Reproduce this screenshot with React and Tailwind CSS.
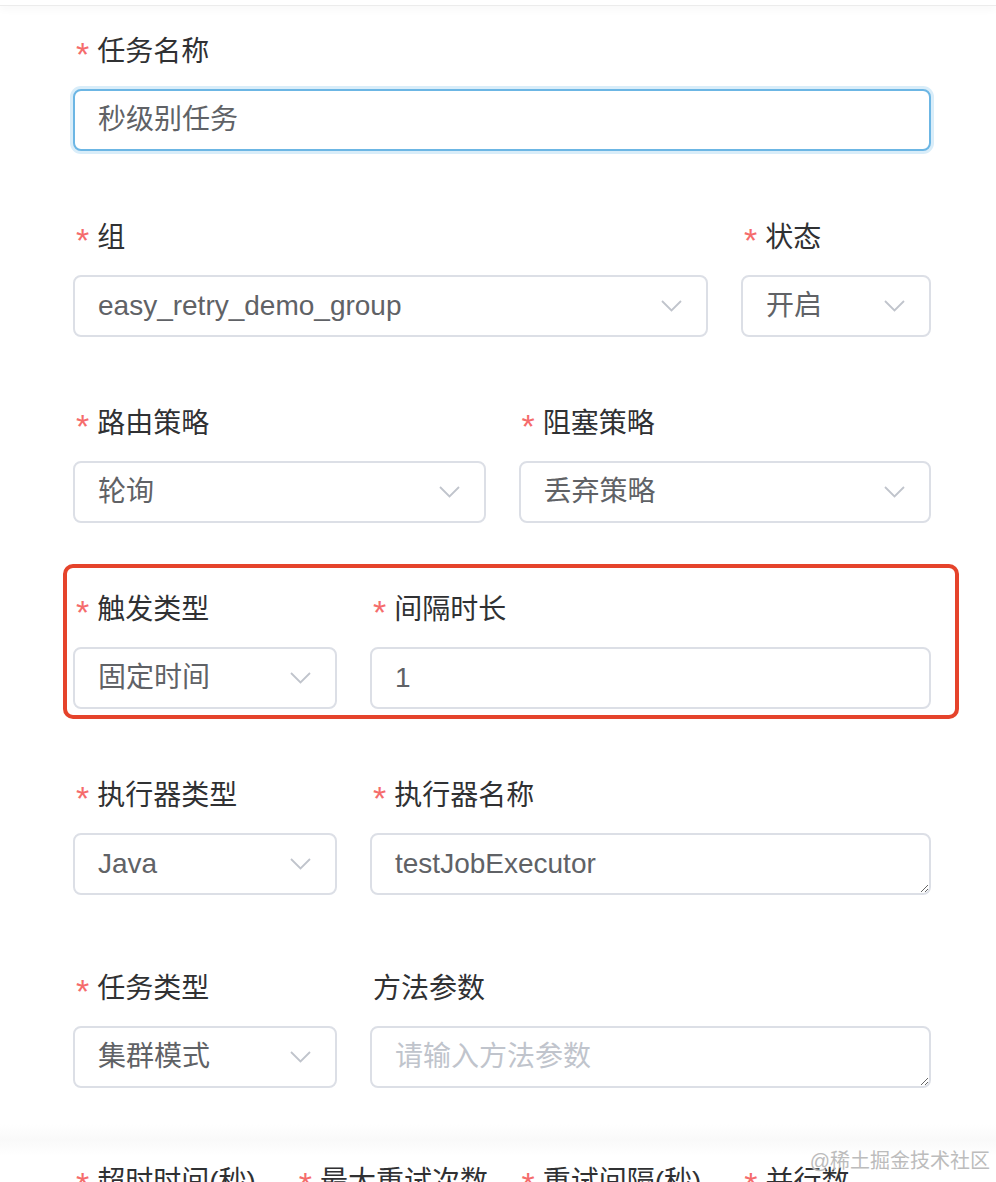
import React from "react";

const FONT = { fontFamily: '"Liberation Sans", "Noto Sans CJK SC", sans-serif' };

function Label({ text, required = true }) {
  return (
    <div className="h-[40px] flex items-center pl-[3px] text-[28px] text-[#303133] leading-none whitespace-nowrap">
      {required && (
        <span className="text-[#f56c6c] text-[34px] mr-[8px] relative top-[2px]">*</span>
      )}
      <span>{text}</span>
    </div>
  );
}

function Chevron() {
  return (
    <svg width="21" height="12" viewBox="0 0 21 12" fill="none">
      <polyline points="1,1 10.5,10.5 20,1" stroke="#c0c4cc" strokeWidth="1.8" />
    </svg>
  );
}

function Select({ value }) {
  return (
    <div className="h-[62px] border-2 border-[#dcdfe6] rounded-[8px] flex items-center justify-between pl-[23px] pr-[24px] text-[28px] text-[#606266] bg-white">
      <span className="whitespace-nowrap">{value}</span>
      <Chevron />
    </div>
  );
}

function Input({ value, focused = false }) {
  return (
    <div
      className={`h-[62px] rounded-[8px] flex items-center pl-[23px] text-[28px] text-[#606266] bg-white ${
        focused
          ? "border-2 border-[#6cb6e4] shadow-[0_0_0_3px_#d9edf9]"
          : "border-2 border-[#dcdfe6]"
      }`}
    >
      {value}
    </div>
  );
}

function TextArea({ value, placeholder }) {
  return (
    <textarea
      readOnly
      rows={1}
      value={value}
      placeholder={placeholder}
      style={FONT}
      className="block w-full h-[62px] border-2 border-[#dcdfe6] rounded-[8px] px-[23px] pt-[9px] text-[28px] leading-[40px] text-[#606266] placeholder-[#c0c4cc] outline-none resize-y bg-white"
    />
  );
}

function Item({ label, required, children, className = "" }) {
  return (
    <div className={`flex flex-col ${className}`}>
      <Label text={label} required={required} />
      <div className="mt-[17px]">{children}</div>
    </div>
  );
}

export default function App() {
  return (
    <div className="relative h-[1182px] bg-white overflow-hidden" style={FONT}>
      {/* top header shadow */}
      <div className="h-[6px] border-b border-[#ececec] shadow-[0_3px_8px_rgba(0,0,0,0.04)]" />

      <div className="pt-[26px] pl-[73px] w-[931px] flex flex-col gap-[67px]">
        <Item label="任务名称">
          <Input value="秒级别任务" focused />
        </Item>

        <div className="flex gap-[33px]">
          <Item label="组" className="flex-1">
            <Select value="easy_retry_demo_group" />
          </Item>
          <Item label="状态" className="w-[190px]">
            <Select value="开启" />
          </Item>
        </div>

        <div className="flex gap-[33px]">
          <Item label="路由策略" className="flex-1">
            <Select value="轮询" />
          </Item>
          <Item label="阻塞策略" className="flex-1">
            <Select value="丢弃策略" />
          </Item>
        </div>

        <div className="flex gap-[33px]">
          <Item label="触发类型" className="w-[264px]">
            <Select value="固定时间" />
          </Item>
          <Item label="间隔时长" className="flex-1">
            <Input value="1" />
          </Item>
        </div>

        <div className="flex gap-[33px] pb-[7px]">
          <Item label="执行器类型" className="w-[264px]">
            <Select value="Java" />
          </Item>
          <Item label="执行器名称" className="flex-1">
            <TextArea value="testJobExecutor" />
          </Item>
        </div>

        <div className="flex gap-[33px] pb-[7px]">
          <Item label="任务类型" className="w-[264px]">
            <Select value="集群模式" />
          </Item>
          <Item label="方法参数" required={false} className="flex-1">
            <TextArea value="" placeholder="请输入方法参数" />
          </Item>
        </div>

        <div className="grid grid-cols-4 gap-[33px]">
          <Item label="超时时间(秒)">
            <Select value="60" />
          </Item>
          <Item label="最大重试次数">
            <Select value="3" />
          </Item>
          <Item label="重试间隔(秒)">
            <Select value="1" />
          </Item>
          <Item label="并行数">
            <Select value="1" />
          </Item>
        </div>
      </div>

      {/* annotation box */}
      <div className="absolute left-[63px] top-[564px] w-[896px] h-[155px] border-4 border-[#e5432b] rounded-[10px] pointer-events-none" />

      {/* bottom fade */}
      <div className="absolute left-0 right-0 top-[1124px] h-[32px] bg-gradient-to-b from-white/0 via-[#f7f7f7]/70 to-white/0 pointer-events-none" />

      {/* watermark */}
      <div className="absolute right-[6px] top-[1151px] text-[20px] text-[#bcbcbc] leading-none whitespace-nowrap [text-shadow:0_0_2px_#fff]">
        @稀土掘金技术社区
      </div>
    </div>
  );
}
